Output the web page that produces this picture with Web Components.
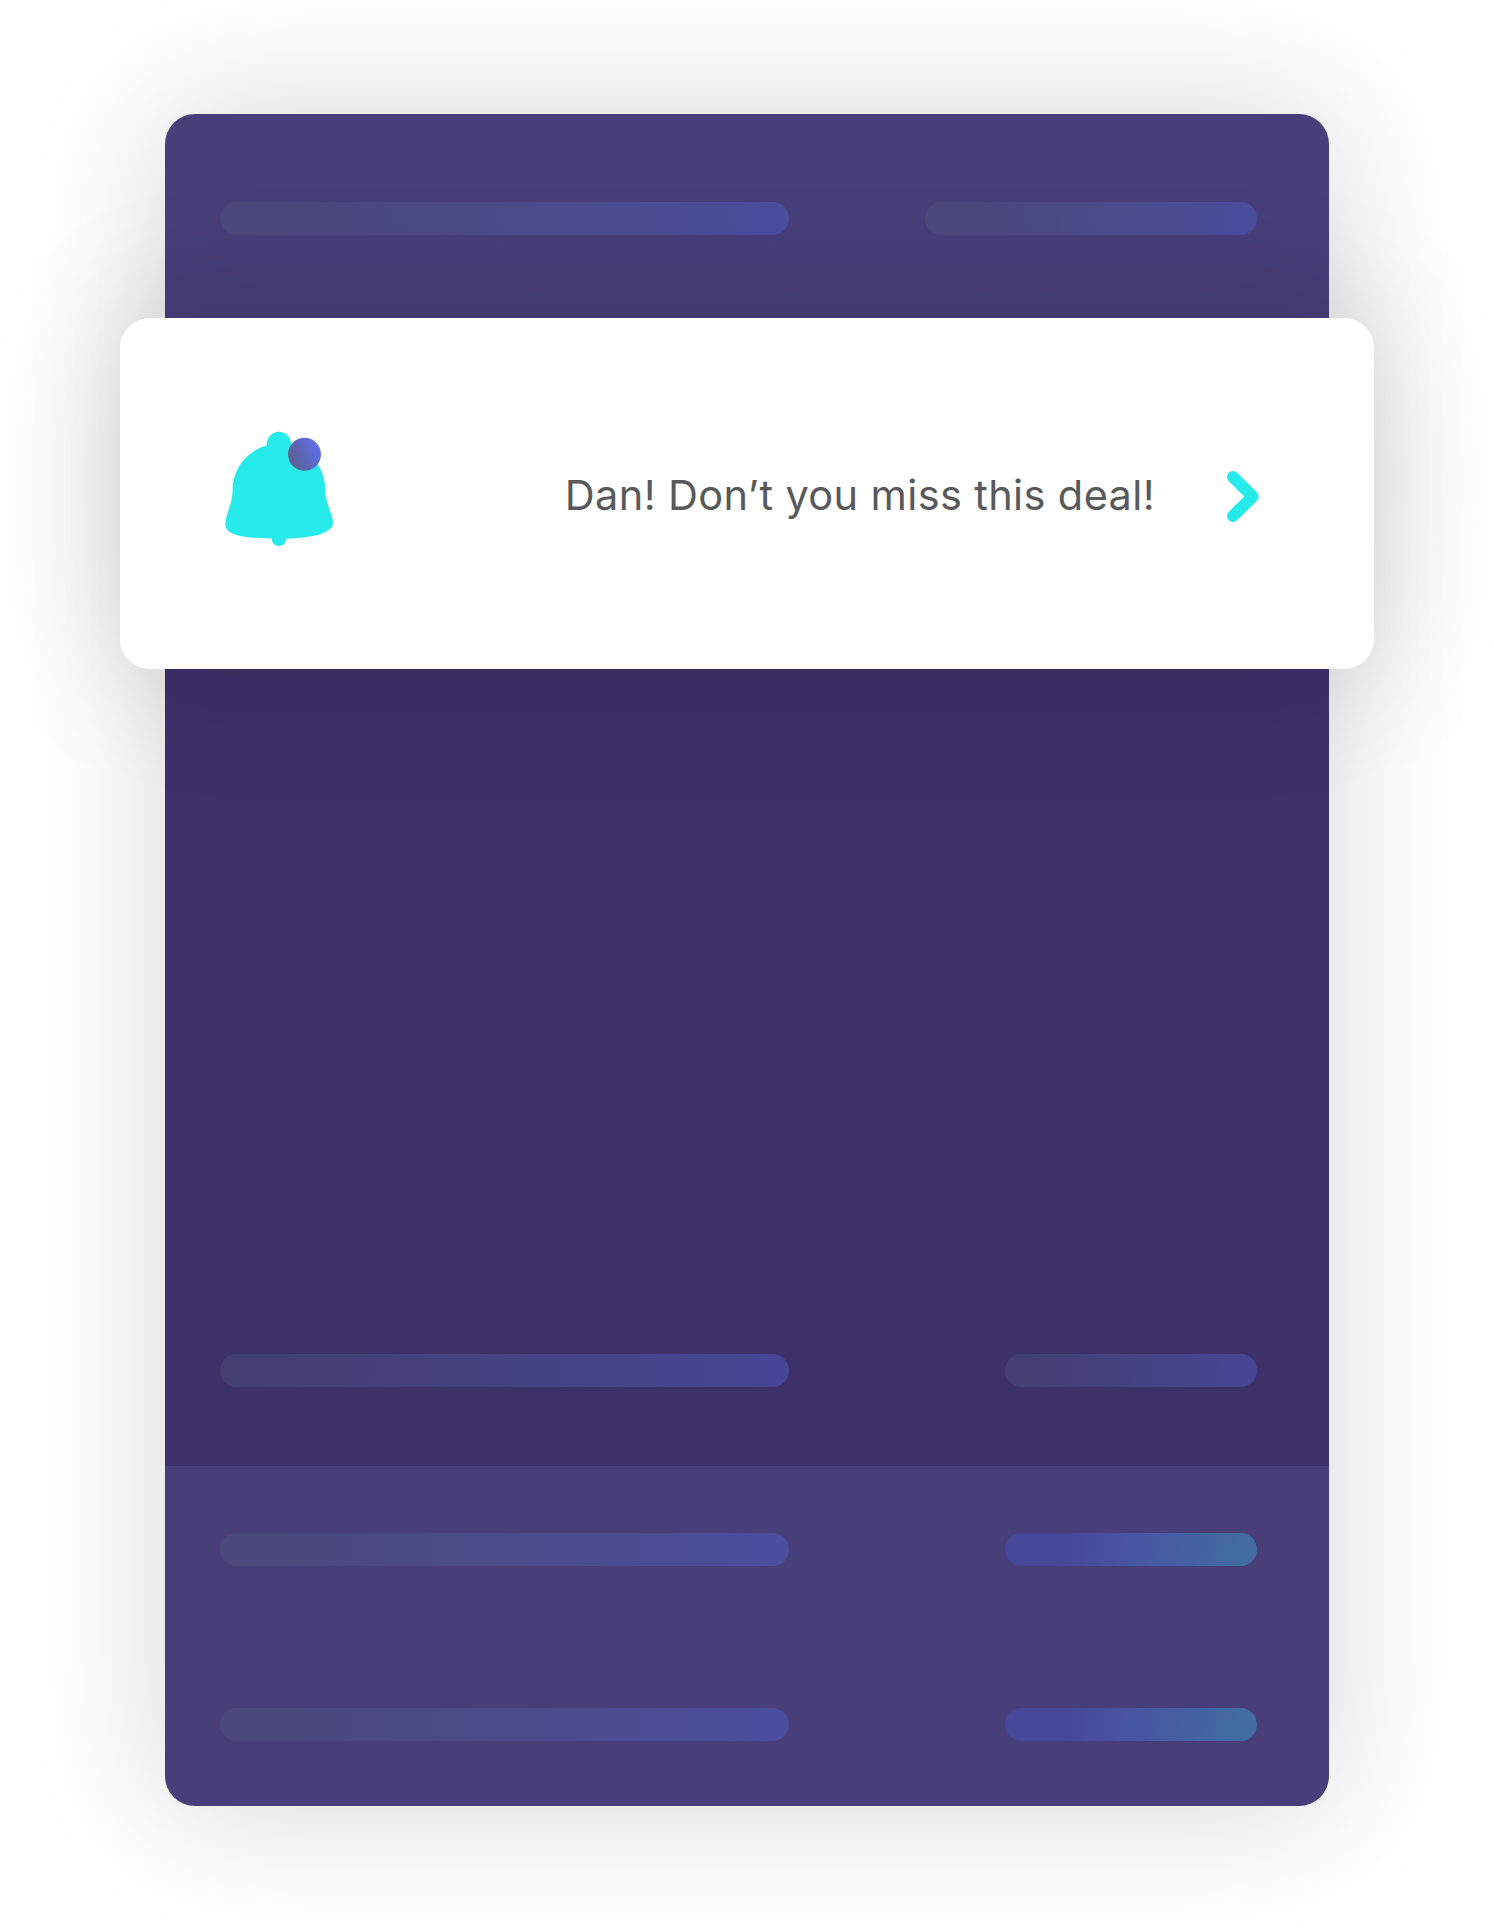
<!DOCTYPE html>
<html lang="en">
<head>
<meta charset="utf-8">
<title>Deal notification</title>
<style>
html, body { margin: 0; background: #fff; }
body { height: 1932px; overflow: hidden; }
</style>
</head>
<body>
<deal-page></deal-page>
<script>
const define = (name, html) => customElements.define(name, class extends HTMLElement {
  constructor() {
    super();
    this.attachShadow({ mode: 'open' }).innerHTML = html;
  }
});

define('skeleton-bar', `
<style>
:host { display: block; box-sizing: border-box; width: 569px; height: 33px; border-radius: 16.5px;
  background: linear-gradient(95deg, #4b487b 0%, #4b487f 15%, #4d4b8e 62%, #4b4e9f 100%); }
:host([size="medium"]) { width: 332px; }
:host([size="small"]) { width: 252px; }
:host([tone="dark"]) { background: linear-gradient(95deg, #443f70 0%, #454079 25%, #464387 65%, #474596 100%); }
:host([tone="accent"]) { background: linear-gradient(97deg, #464799 0%, #474798 24%, #4853a2 47%, #4461a2 73%, #426ca2 92%); }
</style>`);

define('bell-icon', `
<style>:host { display: block; } svg { display: block; }</style>
<svg width="110" height="120" viewBox="72 63 330 360">
  <defs><linearGradient id="dot" x1="0" y1=".75" x2="1" y2=".25">
    <stop offset=".08" stop-color="#5c5f91"/><stop offset=".9" stop-color="#606ee6"/>
  </linearGradient></defs>
  <g fill="#27eaeb">
    <circle cx="237" cy="102" r="36.5"/>
    <circle cx="237" cy="387" r="21.5"/>
    <path d="M237 102C158 102 98 164 98 240C98 282 76 313 76 342C76 374 121 386 237 386C352 386 399 365 399 338C399 313 376 281 376 240C376 164 316 102 237 102Z"/>
  </g>
  <circle cx="313.500" cy="133" r="49.500" fill="url(#dot)"/>
</svg>`);

define('chevron-icon', `
<style>:host { display: block; } svg { display: block; }</style>
<svg width="32" height="51" viewBox="0 0 32 51">
  <path d="M6 6L25.700 25.500L6 45" fill="none" stroke="#27eaeb" stroke-width="12" stroke-linecap="round" stroke-linejoin="round"/>
</svg>`);

define('notification-banner', `
<style>
:host { display: flex; align-items: flex-start; box-sizing: border-box; height: 351px; padding: 113px 115px 0 104px;
  border-radius: 30px; background: #fff; box-shadow: 0 0 140px rgba(0,0,0,.165); position: relative; z-index: 1; }
.message { margin-left: auto; margin-right: 72px; padding-top: 38px; white-space: nowrap;
  font: 400 41.500px/52px Inter, "Liberation Sans", sans-serif; letter-spacing: .37px; color: #58595b; }
chevron-icon { margin-top: 40px; }
</style>
<bell-icon></bell-icon>
<div class="message"><slot></slot></div>
<chevron-icon></chevron-icon>`);

define('card-section', `
<style>
:host { display: flex; flex-direction: column; box-sizing: border-box; background: #473e7a; }
</style>
<slot></slot>`);

define('bar-row', `
<style>:host { display: flex; justify-content: space-between; padding: 0 72px 0 55px; }</style>
<slot></slot>`);

define('deal-page', `
<style>
:host { display: flex; justify-content: center; padding-top: 114px; }
.card { display: flex; flex-direction: column; width: 1164px; height: 1692px; border-radius: 30px;
  box-shadow: 0 0 140px rgba(0,0,0,.165); }
notification-banner { margin: 0 -45px; }
.top { height: 204px; padding-top: 88px; border-radius: 30px 30px 0 0; }
.middle { height: 796.700px; justify-content: flex-end; padding-bottom: 79px; background: #3c3169; }
.bottom { flex: 1; padding-top: 67.500px; gap: 142px; border-radius: 0 0 30px 30px; }
</style>
<div class="card">
  <card-section class="top">
    <bar-row><skeleton-bar></skeleton-bar><skeleton-bar size="medium"></skeleton-bar></bar-row>
  </card-section>
  <notification-banner>Dan! Don’t you miss this deal!</notification-banner>
  <card-section class="middle">
    <bar-row><skeleton-bar tone="dark"></skeleton-bar><skeleton-bar tone="dark" size="small"></skeleton-bar></bar-row>
  </card-section>
  <card-section class="bottom">
    <bar-row><skeleton-bar></skeleton-bar><skeleton-bar tone="accent" size="small"></skeleton-bar></bar-row>
    <bar-row><skeleton-bar></skeleton-bar><skeleton-bar tone="accent" size="small"></skeleton-bar></bar-row>
  </card-section>
</div>`);
</script>
</body>
</html>
